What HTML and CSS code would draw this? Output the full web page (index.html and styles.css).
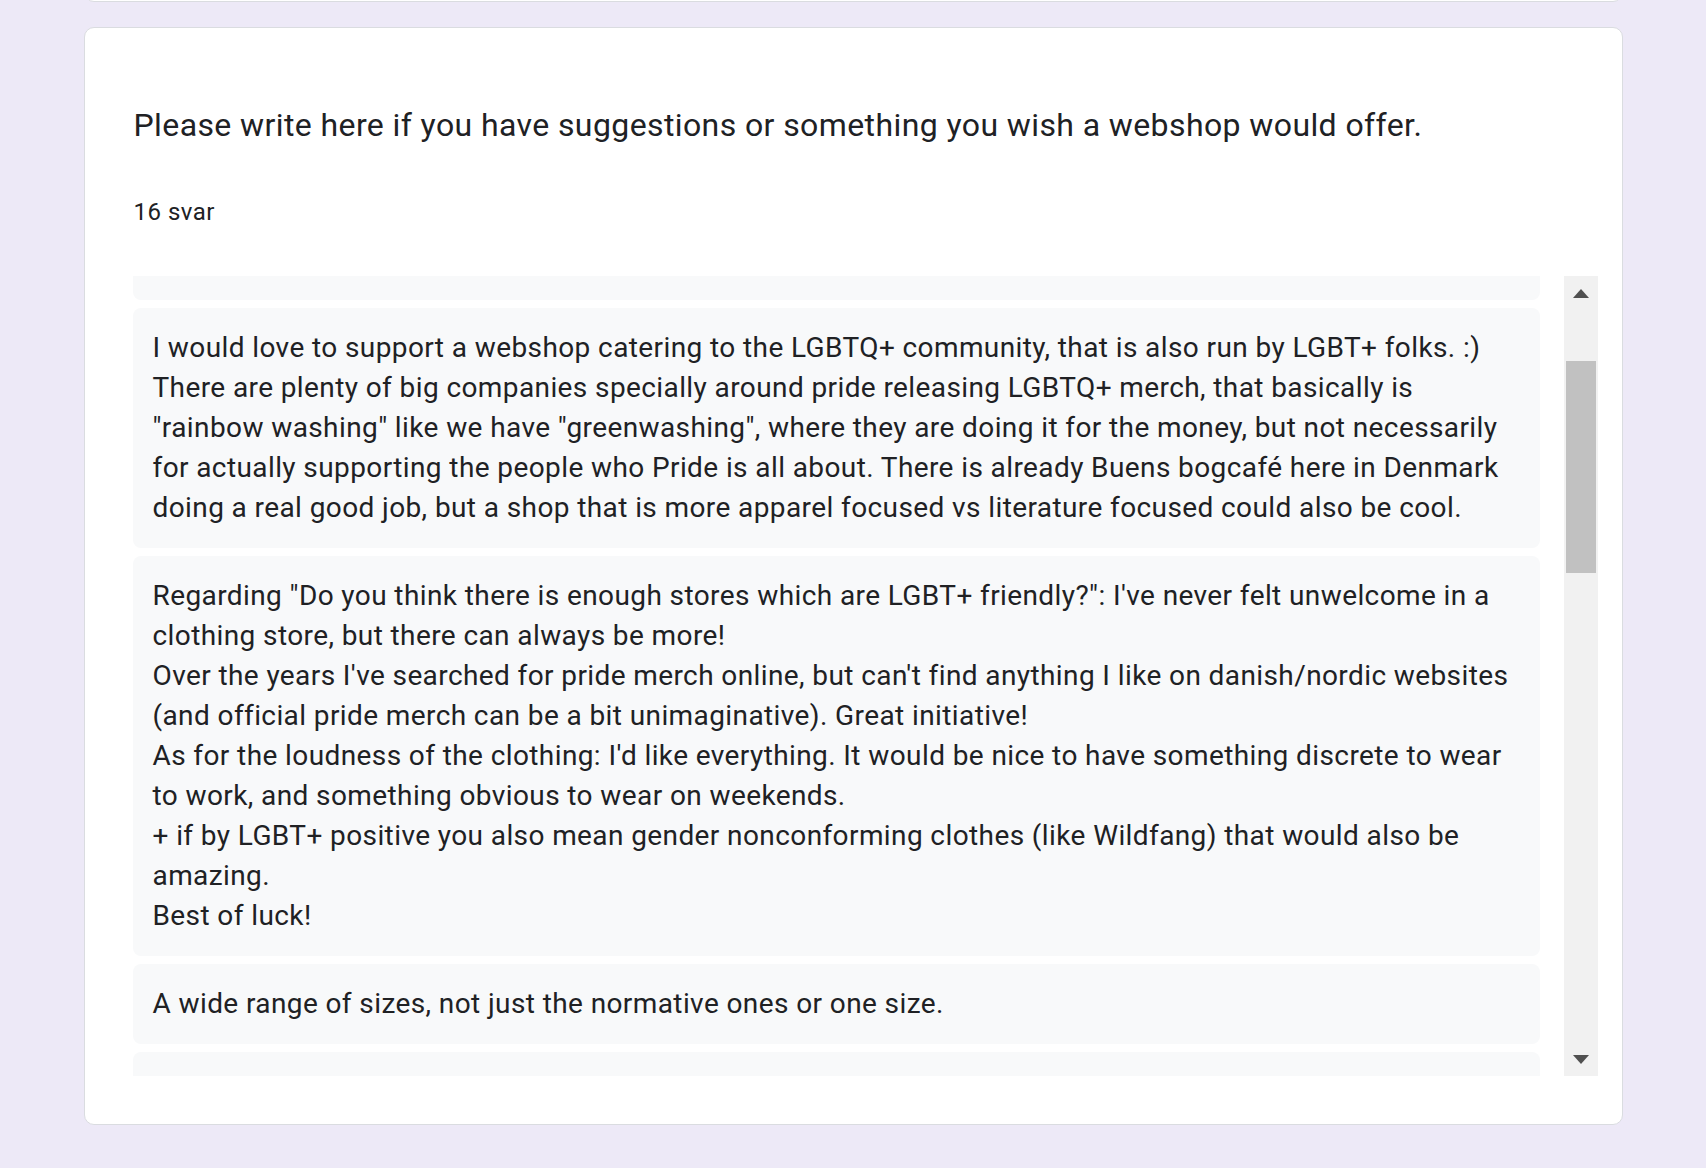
FILE: index.html
```html
<!DOCTYPE html>
<html lang="da">
<head>
<meta charset="utf-8">
<title>Svar</title>
<link rel="stylesheet" href="styles.css">
</head>
<body>
<div class="page">
  <div class="card card-prev"></div>
  <section class="card card-question">
    <h2 class="q-title">Please write here if you have suggestions or something you wish a webshop would offer.</h2>
    <div class="q-count">16 svar</div>
    <div class="responses">
      <div class="viewport">
        <div class="list">
          <div class="resp resp-partial"></div>
          <div class="resp">I would love to support a webshop catering to the LGBTQ+ community, that is also run by LGBT+ folks. :) There are plenty of big companies specially around pride releasing LGBTQ+ merch, that basically is "rainbow washing" like we have "greenwashing", where they are doing it for the money, but not necessarily for actually supporting the people who Pride is all about. There is already Buens bogcafé here in Denmark doing a real good job, but a shop that is more apparel focused vs literature focused could also be cool.</div>
          <div class="resp">Regarding "Do you think there is enough stores which are LGBT+ friendly?": I've never felt unwelcome in a clothing store, but there can always be more!<br>Over the years I've searched for pride merch online, but can't find anything I like on danish/nordic websites (and official pride merch can be a bit unimaginative). Great initiative!<br>As for the loudness of the clothing: I'd like everything. It would be nice to have something discrete to wear to work, and something obvious to wear on weekends.<br>+ if by LGBT+ positive you also mean gender nonconforming clothes (like Wildfang) that would also be amazing.<br>Best of luck!</div>
          <div class="resp">A wide range of sizes, not just the normative ones or one size.</div>
          <div class="resp resp-partial"></div>
        </div>
      </div>
      <div class="scrollbar">
        <div class="sb-btn"><span class="arrow arrow-up"></span></div>
        <div class="sb-track"><div class="sb-thumb"></div></div>
        <div class="sb-btn"><span class="arrow arrow-down"></span></div>
      </div>
    </div>
  </section>
</div>
</body>
</html>
```
FILE: styles.css
```css
html, body {
  margin: 0;
  padding: 0;
}
body {
  background: #ede9f7;
  font-family: Roboto, "Liberation Sans", Arial, sans-serif;
  color: #202124;
  overflow: hidden;
}
.page {
  width: 1539px;
  margin: 0 auto;
}
.card {
  background: #fff;
  border: 1px solid #dadce0;
  border-radius: 10px;
  box-sizing: border-box;
}
.card-prev {
  height: 100px;
  margin-top: -98px;
}
.card-question {
  margin-top: 25px;
  height: 1098px;
  padding: 73px 24px 0 48px;
}
.q-title {
  margin: 0 0 0 1px;
  font-size: 32px;
  font-weight: 400;
  line-height: 48px;
  letter-spacing: 0.4px;
}
.q-count {
  margin: 47px 0 0 1px;
  font-size: 24px;
  line-height: 32px;
  letter-spacing: 0.5px;
}
.responses {
  margin-top: 48px;
  display: flex;
  gap: 24px;
  height: 800px;
}
.viewport {
  flex: 1;
  overflow: hidden;
}
.list {
  display: flex;
  flex-direction: column;
  gap: 8px;
  margin-top: -60px;
}
.resp {
  background: #f8f9fa;
  border-radius: 8px;
  padding: 20px;
  font-size: 28px;
  line-height: 40px;
  letter-spacing: 0.4px;
}
.resp-partial {
  height: 84px;
  box-sizing: border-box;
}
.scrollbar {
  width: 34px;
  background: #f1f1f1;
  display: flex;
  flex-direction: column;
}
.sb-btn {
  height: 34px;
  display: flex;
  align-items: center;
  justify-content: center;
}
.sb-track {
  flex: 1;
  padding: 51px 2px 0;
}
.sb-thumb {
  height: 212px;
  background: #c1c1c1;
}
.arrow {
  width: 0;
  height: 0;
  border-left: 8px solid transparent;
  border-right: 8px solid transparent;
}
.arrow-up {
  border-bottom: 9px solid #505050;
}
.arrow-down {
  border-top: 9px solid #505050;
}
```
